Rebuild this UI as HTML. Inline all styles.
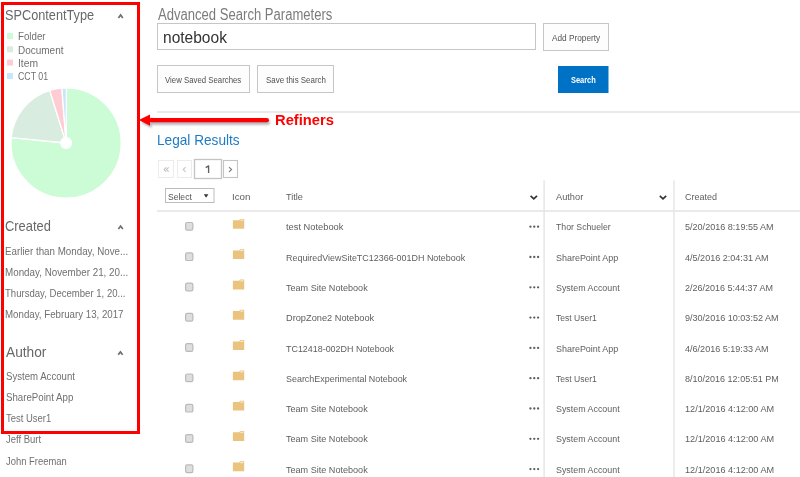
<!DOCTYPE html>
<html><head><meta charset="utf-8"><style>
html,body{margin:0;padding:0;width:800px;height:477px;overflow:hidden;background:#fff;position:relative;font-family:"Liberation Sans", sans-serif;}
.t{position:absolute;white-space:nowrap;line-height:0;height:0;transform-origin:0 0;}
.a{position:absolute;box-sizing:border-box;}
</style></head><body>
<svg class="a" style="left:0;top:0" width="800" height="477" viewBox="0 0 800 477">
  <!-- divider lines -->
  <rect x="157" y="111" width="643" height="2" fill="#eaeaea"/>
  <rect x="157" y="210" width="643" height="2" fill="#eaeaea"/>
  <rect x="543.4" y="180.4" width="1.4" height="297" fill="#e4e4e4"/>
  <rect x="673.3" y="180.4" width="1.4" height="297" fill="#e4e4e4"/>
  <!-- legend squares -->
  <rect x="7" y="33" width="6" height="6" fill="#ccfcd6"/>
  <rect x="7" y="46.3" width="6" height="6" fill="#d8ecdf"/>
  <rect x="7" y="59.6" width="6" height="6" fill="#ffccd4"/>
  <rect x="7" y="73" width="6" height="6" fill="#c8e6fa"/>
  <!-- carets -->
  <path d="M118.4 17.9 L120.6 15 L122.8 17.9" fill="none" stroke="#6e6e6e" stroke-width="1.7"/>
  <path d="M118.4 229 L120.6 226.1 L122.8 229" fill="none" stroke="#6e6e6e" stroke-width="1.7"/>
  <path d="M118.2 354.8 L120.4 351.9 L122.6 354.8" fill="none" stroke="#6e6e6e" stroke-width="1.7"/>
  <!-- pie -->
  <g id="pie"><path d="M66.1 143.0 L66.39 87.90 A55.1 55.1 0 1 1 11.27 137.53 Z" fill="#ccfcd6" stroke="#fff" stroke-width="1.3" stroke-linejoin="round"/><path d="M66.1 143.0 L11.27 137.53 A55.1 55.1 0 0 1 49.71 90.39 Z" fill="#d8ecdf" stroke="#fff" stroke-width="1.3" stroke-linejoin="round"/><path d="M66.1 143.0 L49.71 90.39 A55.1 55.1 0 0 1 61.87 88.06 Z" fill="#ffccd4" stroke="#fff" stroke-width="1.3" stroke-linejoin="round"/><path d="M66.1 143.0 L61.87 88.06 A55.1 55.1 0 0 1 66.39 87.90 Z" fill="#c8e6fa" stroke="#fff" stroke-width="1.3" stroke-linejoin="round"/><circle cx="66.1" cy="143.0" r="6.1" fill="#fff"/></g>
  <!-- input -->
  <rect x="157.5" y="23.5" width="378" height="26" fill="#fff" stroke="#c6c6c6" stroke-width="1"/>
  <rect x="543.5" y="23.5" width="65" height="27" fill="#fdfdfd" stroke="#c6c6c6" stroke-width="1"/>
  <rect x="157.5" y="65.5" width="92" height="27" fill="#fdfdfd" stroke="#c6c6c6" stroke-width="1"/>
  <rect x="257.5" y="65.5" width="76" height="27" fill="#fdfdfd" stroke="#c6c6c6" stroke-width="1"/>
  <rect x="558" y="66" width="50.5" height="27" fill="#0072c6"/>
  <!-- arrow -->
  <defs><filter id="sh" x="-10%" y="-50%" width="130%" height="250%"><feGaussianBlur stdDeviation="1.2"/></filter></defs>
  <g filter="url(#sh)" opacity="0.45" transform="translate(1.5,2.5)">
    <path d="M139.5 120 L150 114.8 L150 125.6 Z" fill="#556"/>
    <rect x="149" y="118" width="119.5" height="4.3" rx="2.1" fill="#556"/>
  </g>
  <path d="M138.8 120.1 L150 114.6 L150 125.7 Z" fill="#f00"/>
  <rect x="149" y="118" width="120" height="4.3" rx="2.15" fill="#f00"/>
  <!-- pager -->
  <rect x="158.5" y="160.5" width="15" height="17" fill="#fff" stroke="#ececec"/>
  <rect x="177.5" y="160.5" width="14" height="17" fill="#fff" stroke="#ececec"/>
  <rect x="194.5" y="159.5" width="27" height="19" fill="#fff" stroke="#c4c4c4" stroke-width="1.3"/>
  <rect x="223.5" y="160.5" width="14" height="17" fill="#fff" stroke="#c4c4c4" stroke-width="1.1"/>
  <path d="M166.2 167.3 L164.2 169.5 L166.2 171.7 M168.6 167.3 L166.6 169.5 L168.6 171.7" fill="none" stroke="#c4c4c4" stroke-width="1.2"/>
  <path d="M185.6 167.2 L183.2 169.5 L185.6 171.8" fill="none" stroke="#c8c8c8" stroke-width="1.1"/>
  <path d="M229 167.2 L231.6 169.5 L229 171.8" fill="none" stroke="#777" stroke-width="1.1"/>
  <path d="M205.7 167.6 L208.6 165.9 V173.1" fill="none" stroke="#606060" stroke-width="1.35" stroke-linejoin="round"/>
  <!-- select box -->
  <rect x="165.5" y="188.5" width="48.5" height="14" fill="#fff" stroke="#bdbdbd"/>
  <path d="M203.8 194.2 L208.4 194.2 L206.1 197.8 Z" fill="#333"/>
  <!-- header chevrons -->
  <path d="M530.6 195.8 L533.8 198.9 L537 195.8" fill="none" stroke="#333" stroke-width="1.7"/>
  <path d="M659.8 195.8 L663 198.9 L666.2 195.8" fill="none" stroke="#333" stroke-width="1.7"/>
  <g id="rows"><rect x="185.6" y="222.50" width="7.3" height="7.7" rx="1.6" fill="#dedede" stroke="#bababa" stroke-width="1.2"/><path d="M232.9 220.20 H239.2 L240.2 218.90 H244.2 V228.80 H232.9 Z" fill="#eac47f"/><rect x="240.3" y="219.60" width="3" height="1.2" fill="#f7ead0"/><circle cx="530.45" cy="226.70" r="1.15" fill="#5c5c5c"/><circle cx="534.27" cy="226.70" r="1.15" fill="#5c5c5c"/><circle cx="538.09" cy="226.70" r="1.15" fill="#5c5c5c"/><rect x="185.6" y="252.80" width="7.3" height="7.7" rx="1.6" fill="#dedede" stroke="#bababa" stroke-width="1.2"/><path d="M232.9 250.50 H239.2 L240.2 249.20 H244.2 V259.10 H232.9 Z" fill="#eac47f"/><rect x="240.3" y="249.90" width="3" height="1.2" fill="#f7ead0"/><circle cx="530.45" cy="257.00" r="1.15" fill="#5c5c5c"/><circle cx="534.27" cy="257.00" r="1.15" fill="#5c5c5c"/><circle cx="538.09" cy="257.00" r="1.15" fill="#5c5c5c"/><rect x="185.6" y="283.10" width="7.3" height="7.7" rx="1.6" fill="#dedede" stroke="#bababa" stroke-width="1.2"/><path d="M232.9 280.80 H239.2 L240.2 279.50 H244.2 V289.40 H232.9 Z" fill="#eac47f"/><rect x="240.3" y="280.20" width="3" height="1.2" fill="#f7ead0"/><circle cx="530.45" cy="287.30" r="1.15" fill="#5c5c5c"/><circle cx="534.27" cy="287.30" r="1.15" fill="#5c5c5c"/><circle cx="538.09" cy="287.30" r="1.15" fill="#5c5c5c"/><rect x="185.6" y="313.40" width="7.3" height="7.7" rx="1.6" fill="#dedede" stroke="#bababa" stroke-width="1.2"/><path d="M232.9 311.10 H239.2 L240.2 309.80 H244.2 V319.70 H232.9 Z" fill="#eac47f"/><rect x="240.3" y="310.50" width="3" height="1.2" fill="#f7ead0"/><circle cx="530.45" cy="317.60" r="1.15" fill="#5c5c5c"/><circle cx="534.27" cy="317.60" r="1.15" fill="#5c5c5c"/><circle cx="538.09" cy="317.60" r="1.15" fill="#5c5c5c"/><rect x="185.6" y="343.70" width="7.3" height="7.7" rx="1.6" fill="#dedede" stroke="#bababa" stroke-width="1.2"/><path d="M232.9 341.40 H239.2 L240.2 340.10 H244.2 V350.00 H232.9 Z" fill="#eac47f"/><rect x="240.3" y="340.80" width="3" height="1.2" fill="#f7ead0"/><circle cx="530.45" cy="347.90" r="1.15" fill="#5c5c5c"/><circle cx="534.27" cy="347.90" r="1.15" fill="#5c5c5c"/><circle cx="538.09" cy="347.90" r="1.15" fill="#5c5c5c"/><rect x="185.6" y="374.00" width="7.3" height="7.7" rx="1.6" fill="#dedede" stroke="#bababa" stroke-width="1.2"/><path d="M232.9 371.70 H239.2 L240.2 370.40 H244.2 V380.30 H232.9 Z" fill="#eac47f"/><rect x="240.3" y="371.10" width="3" height="1.2" fill="#f7ead0"/><circle cx="530.45" cy="378.20" r="1.15" fill="#5c5c5c"/><circle cx="534.27" cy="378.20" r="1.15" fill="#5c5c5c"/><circle cx="538.09" cy="378.20" r="1.15" fill="#5c5c5c"/><rect x="185.6" y="404.30" width="7.3" height="7.7" rx="1.6" fill="#dedede" stroke="#bababa" stroke-width="1.2"/><path d="M232.9 402.00 H239.2 L240.2 400.70 H244.2 V410.60 H232.9 Z" fill="#eac47f"/><rect x="240.3" y="401.40" width="3" height="1.2" fill="#f7ead0"/><circle cx="530.45" cy="408.50" r="1.15" fill="#5c5c5c"/><circle cx="534.27" cy="408.50" r="1.15" fill="#5c5c5c"/><circle cx="538.09" cy="408.50" r="1.15" fill="#5c5c5c"/><rect x="185.6" y="434.60" width="7.3" height="7.7" rx="1.6" fill="#dedede" stroke="#bababa" stroke-width="1.2"/><path d="M232.9 432.30 H239.2 L240.2 431.00 H244.2 V440.90 H232.9 Z" fill="#eac47f"/><rect x="240.3" y="431.70" width="3" height="1.2" fill="#f7ead0"/><circle cx="530.45" cy="438.80" r="1.15" fill="#5c5c5c"/><circle cx="534.27" cy="438.80" r="1.15" fill="#5c5c5c"/><circle cx="538.09" cy="438.80" r="1.15" fill="#5c5c5c"/><rect x="185.6" y="464.90" width="7.3" height="7.7" rx="1.6" fill="#dedede" stroke="#bababa" stroke-width="1.2"/><path d="M232.9 462.60 H239.2 L240.2 461.30 H244.2 V471.20 H232.9 Z" fill="#eac47f"/><rect x="240.3" y="462.00" width="3" height="1.2" fill="#f7ead0"/><circle cx="530.45" cy="469.10" r="1.15" fill="#5c5c5c"/><circle cx="534.27" cy="469.10" r="1.15" fill="#5c5c5c"/><circle cx="538.09" cy="469.10" r="1.15" fill="#5c5c5c"/></g>
</svg>
<!-- red refiner box -->
<div class="a" style="left:1px;top:2px;width:139px;height:432px;border:3px solid #f00;"></div>

<div class="t" style="left:5.43px;top:15.00px;font-size:14.5px;color:#686868;font-weight:400;transform:scaleX(0.8772);">SPContentType</div>
<div class="t" style="left:17.72px;top:37.00px;font-size:10.4px;color:#707070;font-weight:400;transform:scaleX(0.9365);">Folder</div>
<div class="t" style="left:17.70px;top:51.00px;font-size:10.4px;color:#707070;font-weight:400;transform:scaleX(0.9605);">Document</div>
<div class="t" style="left:17.57px;top:64.00px;font-size:10.4px;color:#707070;font-weight:400;transform:scaleX(0.9928);">Item</div>
<div class="t" style="left:18.06px;top:77.00px;font-size:10.4px;color:#707070;font-weight:400;transform:scaleX(0.8469);">CCT 01</div>
<div class="t" style="left:5.36px;top:226.00px;font-size:14.5px;color:#686868;font-weight:400;transform:scaleX(0.8885);">Created</div>
<div class="t" style="left:4.72px;top:252.00px;font-size:10px;color:#707070;font-weight:400;transform:scaleX(0.9774);">Earlier than Monday, Nove...</div>
<div class="t" style="left:4.71px;top:273.00px;font-size:10px;color:#707070;font-weight:400;transform:scaleX(0.9818);">Monday, November 21, 20...</div>
<div class="t" style="left:5.31px;top:294.00px;font-size:10px;color:#707070;font-weight:400;transform:scaleX(0.9567);">Thursday, December 1, 20...</div>
<div class="t" style="left:4.72px;top:315.00px;font-size:10px;color:#707070;font-weight:400;transform:scaleX(0.9706);">Monday, February 13, 2017</div>
<div class="t" style="left:6.00px;top:352.00px;font-size:14.5px;color:#686868;font-weight:400;transform:scaleX(0.9452);">Author</div>
<div class="t" style="left:5.57px;top:377.00px;font-size:10px;color:#707070;font-weight:400;transform:scaleX(0.9614);">System Account</div>
<div class="t" style="left:5.56px;top:398.00px;font-size:10px;color:#707070;font-weight:400;transform:scaleX(0.9684);">SharePoint App</div>
<div class="t" style="left:5.81px;top:419.00px;font-size:10px;color:#707070;font-weight:400;transform:scaleX(0.9463);">Test User1</div>
<div class="t" style="left:5.86px;top:440.00px;font-size:10px;color:#707070;font-weight:400;transform:scaleX(0.9491);">Jeff Burt</div>
<div class="t" style="left:5.86px;top:462.00px;font-size:10px;color:#707070;font-weight:400;transform:scaleX(0.9417);">John Freeman</div>
<div class="t" style="left:158.00px;top:15.00px;font-size:15.6px;color:#7c7c7c;font-weight:400;transform:scaleX(0.8383);">Advanced Search Parameters</div>
<div class="t" style="left:162.99px;top:38.00px;font-size:15.6px;color:#333;font-weight:400;transform:scaleX(0.9960);">notebook</div>
<div class="t" style="left:551.70px;top:38.00px;font-size:9.3px;color:#555;font-weight:400;transform:scaleX(0.8880);">Add Property</div>
<div class="t" style="left:571.11px;top:80.00px;font-size:9.3px;color:#fff;font-weight:700;transform:scaleX(0.7974);">Search</div>
<div class="t" style="left:165.40px;top:80.00px;font-size:8.6px;color:#505050;font-weight:400;transform:scaleX(0.9082);">View Saved Searches</div>
<div class="t" style="left:265.54px;top:80.00px;font-size:8.6px;color:#505050;font-weight:400;transform:scaleX(0.9220);">Save this Search</div>
<div class="t" style="left:274.64px;top:120.00px;font-size:14px;color:#f00;font-weight:700;transform:scaleX(1.0512);">Refiners</div>
<div class="t" style="left:157.11px;top:140.00px;font-size:14.8px;color:#1e7bc6;font-weight:400;transform:scaleX(0.9219);">Legal Results</div>
<div class="t" style="left:167.61px;top:197.00px;font-size:9.6px;color:#555;font-weight:400;transform:scaleX(0.8924);">Select</div>
<div class="t" style="left:232.12px;top:197.00px;font-size:9.6px;color:#606060;font-weight:400;transform:scaleX(1.0183);">Icon</div>
<div class="t" style="left:286.42px;top:197.00px;font-size:9.6px;color:#606060;font-weight:400;transform:scaleX(0.9539);">Title</div>
<div class="t" style="left:556.00px;top:197.00px;font-size:9.6px;color:#606060;font-weight:400;transform:scaleX(0.9624);">Author</div>
<div class="t" style="left:684.55px;top:197.00px;font-size:9.6px;color:#606060;font-weight:400;transform:scaleX(0.9370);">Created</div>
<div class="t" style="left:286.26px;top:227.00px;font-size:9.6px;color:#5e5e5e;font-weight:400;transform:scaleX(0.9697);">test Notebook</div>
<div class="t" style="left:555.83px;top:227.00px;font-size:9.6px;color:#5e5e5e;font-weight:400;transform:scaleX(0.9087);">Thor Schueler</div>
<div class="t" style="left:684.94px;top:227.00px;font-size:9.6px;color:#5e5e5e;font-weight:400;transform:scaleX(0.9439);">5/20/2016 8:19:55 AM</div>
<div class="t" style="left:285.68px;top:258.00px;font-size:9.6px;color:#5e5e5e;font-weight:400;transform:scaleX(0.9314);">RequiredViewSiteTC12366-001DH Notebook</div>
<div class="t" style="left:555.60px;top:258.00px;font-size:9.6px;color:#5e5e5e;font-weight:400;transform:scaleX(0.9335);">SharePoint App</div>
<div class="t" style="left:685.12px;top:258.00px;font-size:9.6px;color:#5e5e5e;font-weight:400;transform:scaleX(0.9434);">4/5/2016 2:04:31 AM</div>
<div class="t" style="left:286.22px;top:288.00px;font-size:9.6px;color:#5e5e5e;font-weight:400;transform:scaleX(0.9455);">Team Site Notebook</div>
<div class="t" style="left:555.60px;top:288.00px;font-size:9.6px;color:#5e5e5e;font-weight:400;transform:scaleX(0.9252);">System Account</div>
<div class="t" style="left:684.85px;top:288.00px;font-size:9.6px;color:#5e5e5e;font-weight:400;transform:scaleX(0.9373);">2/26/2016 5:44:37 AM</div>
<div class="t" style="left:285.66px;top:318.00px;font-size:9.6px;color:#5e5e5e;font-weight:400;transform:scaleX(0.9619);">DropZone2 Notebook</div>
<div class="t" style="left:555.83px;top:318.00px;font-size:9.6px;color:#5e5e5e;font-weight:400;transform:scaleX(0.8907);">Test User1</div>
<div class="t" style="left:684.89px;top:318.00px;font-size:9.6px;color:#5e5e5e;font-weight:400;transform:scaleX(0.9429);">9/30/2016 10:03:52 AM</div>
<div class="t" style="left:286.22px;top:349.00px;font-size:9.6px;color:#5e5e5e;font-weight:400;transform:scaleX(0.9295);">TC12418-002DH Notebook</div>
<div class="t" style="left:555.60px;top:349.00px;font-size:9.6px;color:#5e5e5e;font-weight:400;transform:scaleX(0.9335);">SharePoint App</div>
<div class="t" style="left:685.12px;top:349.00px;font-size:9.6px;color:#5e5e5e;font-weight:400;transform:scaleX(0.9434);">4/6/2016 5:19:33 AM</div>
<div class="t" style="left:286.00px;top:379.00px;font-size:9.6px;color:#5e5e5e;font-weight:400;transform:scaleX(0.9305);">SearchExperimental Notebook</div>
<div class="t" style="left:555.83px;top:379.00px;font-size:9.6px;color:#5e5e5e;font-weight:400;transform:scaleX(0.8907);">Test User1</div>
<div class="t" style="left:684.94px;top:379.00px;font-size:9.6px;color:#5e5e5e;font-weight:400;transform:scaleX(0.9394);">8/10/2016 12:05:51 PM</div>
<div class="t" style="left:286.22px;top:409.00px;font-size:9.6px;color:#5e5e5e;font-weight:400;transform:scaleX(0.9455);">Team Site Notebook</div>
<div class="t" style="left:555.60px;top:409.00px;font-size:9.6px;color:#5e5e5e;font-weight:400;transform:scaleX(0.9252);">System Account</div>
<div class="t" style="left:684.62px;top:409.00px;font-size:9.6px;color:#5e5e5e;font-weight:400;transform:scaleX(0.9494);">12/1/2016 4:12:00 AM</div>
<div class="t" style="left:286.22px;top:439.00px;font-size:9.6px;color:#5e5e5e;font-weight:400;transform:scaleX(0.9455);">Team Site Notebook</div>
<div class="t" style="left:555.60px;top:439.00px;font-size:9.6px;color:#5e5e5e;font-weight:400;transform:scaleX(0.9252);">System Account</div>
<div class="t" style="left:684.62px;top:439.00px;font-size:9.6px;color:#5e5e5e;font-weight:400;transform:scaleX(0.9494);">12/1/2016 4:12:00 AM</div>
<div class="t" style="left:286.22px;top:470.00px;font-size:9.6px;color:#5e5e5e;font-weight:400;transform:scaleX(0.9455);">Team Site Notebook</div>
<div class="t" style="left:555.60px;top:470.00px;font-size:9.6px;color:#5e5e5e;font-weight:400;transform:scaleX(0.9252);">System Account</div>
<div class="t" style="left:684.62px;top:470.00px;font-size:9.6px;color:#5e5e5e;font-weight:400;transform:scaleX(0.9494);">12/1/2016 4:12:00 AM</div>
</body></html>
